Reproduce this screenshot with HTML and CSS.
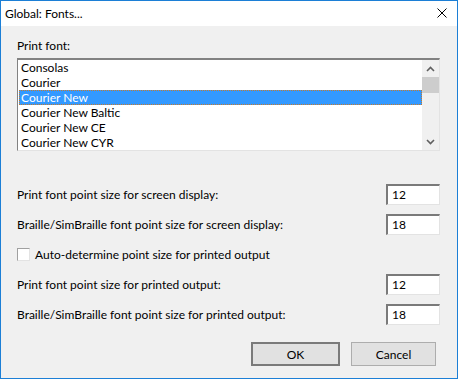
FILE: index.html
```html
<!DOCTYPE html>
<html>
<head>
    <meta name='viewport' content='width=device-width, initial-scale=1.0'>
    <title>Global: Fonts...</title>
    <link rel="stylesheet" href="styles.css">
</head>
<body>
    <div class='window'>
        <div class='titlebar'>
            <span class='title'>Global: Fonts...</span>
            <span class='close'>
                <svg width='10' height='10' viewBox='0 0 10 10'>
                    <path d='M0.5 0.5 L9.5 9.5 M9.5 0.5 L0.5 9.5' stroke='#000' stroke-width='1' fill='none'/>
                </svg>
            </span>
        </div>
        <div class='content'>
            <div class='group-label'>Print font:</div>
            <div class='listbox'>
                <div class='items'>
                    <div class='item'>Consolas</div>
                    <div class='item'>Courier</div>
                    <div class='item selected'>Courier New</div>
                    <div class='item'>Courier New Baltic</div>
                    <div class='item'>Courier New CE</div>
                    <div class='item'>Courier New CYR</div>
                </div>
                <div class='scrollbar'>
                    <div class='arrow'>
                        <svg width='9' height='6' viewBox='0 0 9 6'>
                            <path d='M1 5 L4.5 1.5 L8 5' stroke='#606060' stroke-width='1.6' fill='none'/>
                        </svg>
                    </div>
                    <div class='track'>
                        <div class='thumb'></div>
                    </div>
                    <div class='arrow'>
                        <svg width='9' height='6' viewBox='0 0 9 6'>
                            <path d='M1 1 L4.5 4.5 L8 1' stroke='#606060' stroke-width='1.6' fill='none'/>
                        </svg>
                    </div>
                </div>
            </div>

            <div class='settings'>
                <div class='row'>
                    <span>Print font point size for screen display:</span>
                    <div class='field'>12</div>
                </div>
                <div class='row'>
                    <span>Braille/SimBraille font point size for screen display:</span>
                    <div class='field'>18</div>
                </div>
                <div class='row check-row'>
                    <span class='checkbox'></span>
                    <span>Auto-determine point size for printed output</span>
                </div>
                <div class='row'>
                    <span>Print font point size for printed output:</span>
                    <div class='field'>12</div>
                </div>
                <div class='row'>
                    <span>Braille/SimBraille font point size for printed output:</span>
                    <div class='field'>18</div>
                </div>
            </div>

            <div class='buttons'>
                <button class='btn btn-ok'>OK</button>
                <button class='btn btn-cancel'>Cancel</button>
            </div>
        </div>
    </div>
</body>
</html>
```

FILE: styles.css
```css
body {
    margin: 0;
    font-family: Lato, "Noto Sans", Arial, sans-serif;
    font-size: 12px;
    color: #000;
}
.window {
    width: 458px;
    height: 379px;
    box-sizing: border-box;
    border: 1px solid #1c7fd6;
    display: flex;
    flex-direction: column;
}
.titlebar {
    height: 25px;
    background-color: #fff;
    display: flex;
    align-items: center;
    justify-content: space-between;
    padding-left: 4px;
}
.title {
    line-height: 15px;
}
.close {
    width: 46px;
    display: flex;
    justify-content: center;
    align-items: center;
    margin-right: -8px;
    margin-top: -2px;
}
.content {
    flex: 1;
    background-color: #f0f0f0;
    padding: 12px 17px 0 16px;
}
.group-label {
    line-height: 15px;
    margin-bottom: 5px;
}
.listbox {
    height: 93px;
    box-sizing: border-box;
    background-color: #fff;
    border-top: 2px solid #828282;
    border-left: 1px solid #828282;
    border-right: 1px solid #e3e3e3;
    border-bottom: 1px solid #e3e3e3;
    padding-left: 1px;
    display: flex;
}
.items {
    flex: 1;
}
.item {
    height: 15px;
    line-height: 15px;
    padding-left: 2px;
    white-space: nowrap;
}
.item.selected {
    background-color: #3399ff;
    color: #fff;
    outline: 1px dotted #c87a2a;
    outline-offset: -1px;
}
.scrollbar {
    width: 17px;
    background-color: #f0f0f0;
    display: flex;
    flex-direction: column;
}
.arrow {
    height: 17px;
    display: flex;
    align-items: center;
    justify-content: center;
}
.track {
    flex: 1;
}
.thumb {
    height: 16px;
    background-color: #cdcdcd;
}
.settings {
    margin-top: 33px;
    display: flex;
    flex-direction: column;
    gap: 9px;
}
.row {
    height: 21px;
    display: flex;
    align-items: center;
    justify-content: space-between;
}
.check-row {
    justify-content: flex-start;
    gap: 5px;
}
.checkbox {
    width: 13px;
    height: 13px;
    box-sizing: border-box;
    background-color: #fff;
    border: 1px solid;
    border-color: #a0a0a0 #e3e3e3 #e3e3e3 #a0a0a0;
}
.field {
    width: 54px;
    height: 21px;
    box-sizing: border-box;
    background-color: #fff;
    border-top: 2px solid #7a7a7a;
    border-left: 2px solid #7a7a7a;
    border-right: 1px solid #e3e3e3;
    border-bottom: 1px solid #e3e3e3;
    padding-left: 4px;
    line-height: 18px;
}
.buttons {
    margin-top: 17px;
    margin-right: 4px;
    display: flex;
    justify-content: flex-end;
    gap: 11px;
}
.btn {
    font-family: Lato, "Noto Sans", Arial, sans-serif;
    font-size: 12px;
    height: 24px;
    background-color: #e1e1e1;
    border: 1px solid #adadad;
    padding: 0;
    color: #000;
}
.btn-ok {
    width: 89px;
    border: 2px solid #7a7a7a;
}
.btn-cancel {
    width: 85px;
}
```
